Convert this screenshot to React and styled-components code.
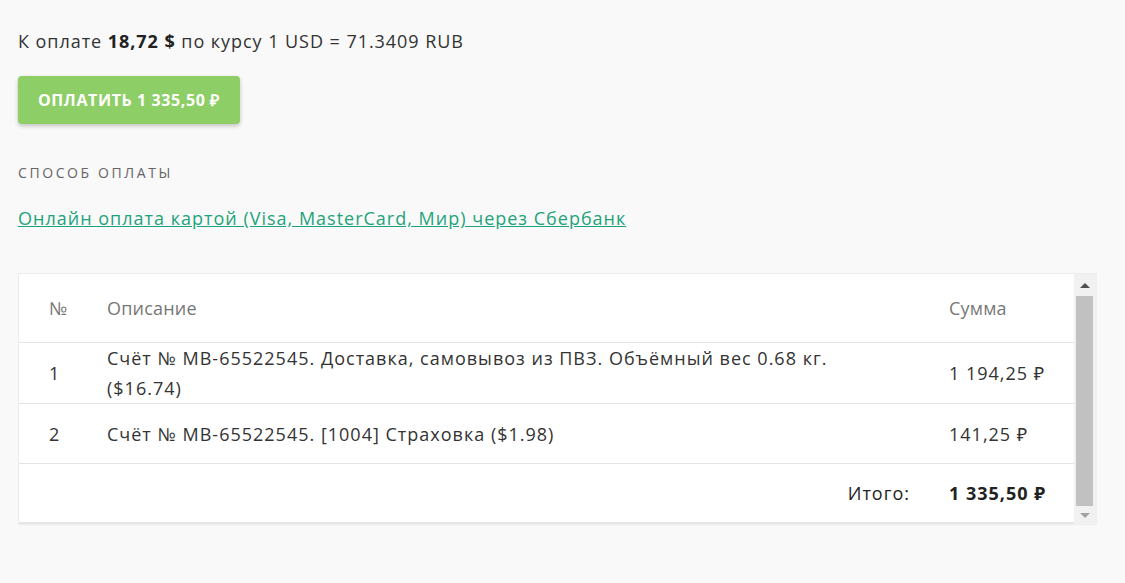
import React from "react";
import styled, {createGlobalStyle} from "styled-components";

const GlobalStyle = createGlobalStyle`
  html, body {
    margin: 0;
    padding: 0;
    background: #f9f9f9;
  }
  body {
    font-family: "Open Sans", "Noto Sans", sans-serif;
    color: #333;
  }
`;

const Page = styled.div`
  padding: 26px 18px 40px 18px;
  width: 1079px;
`;

const Summary = styled.div`
  font-size: 18px;
  line-height: 30px;
  letter-spacing: 0.95px;
  color: #333;

  b {
    font-weight: 700;
    color: #222;
  }
`;

const PayButton = styled.button`
  margin-top: 20px;
  height: 48px;
  padding: 0 20px;
  border: none;
  border-radius: 4px;
  background: #8ece66;
  color: #fff;
  font-family: "Open Sans", sans-serif;
  font-weight: 700;
  font-size: 16px;
  letter-spacing: 0.6px;
  text-transform: uppercase;
  box-shadow: 0 2px 4px rgba(0, 0, 0, 0.22);
  cursor: pointer;
  display: block;
`;

const SectionLabel = styled.div`
  margin-top: 39px;
  font-size: 14px;
  line-height: 20px;
  letter-spacing: 2.6px;
  color: #666;
  text-transform: uppercase;
`;

const MethodLink = styled.a`
  display: inline-block;
  margin-top: 20px;
  font-size: 18px;
  line-height: 30px;
  letter-spacing: 1px;
  color: #1ea37c;
  text-decoration: underline;
`;

const TableBox = styled.div`
  margin-top: 40px;
  display: flex;
  background: #fff;
  border: 1px solid #ececec;
  border-right: 2px solid #f0f0f0;
`;

const Table = styled.div`
  flex: 1;
  border-bottom: 2px solid #e6e6e6;
`;

const Row = styled.div`
  display: grid;
  grid-template-columns: 88px 1fr 125px;
  align-items: center;
  min-height: ${(p) => p.$height}px;
  border-top: ${(p) => (p.$first ? "none" : "1px solid #e3e3e3")};
  font-size: 18px;
  line-height: 30px;
  letter-spacing: ${(p) => (p.$head ? "0.2px" : "1px")};
  color: ${(p) => (p.$head ? "#777" : "#333")};
`;

const NumCell = styled.div`
  padding-left: 30px;
`;

const DescCell = styled.div`
  padding-right: 70px;
`;

const SumCell = styled.div`
  font-weight: ${(p) => (p.$bold ? 700 : 400)};
  color: ${(p) => (p.$bold ? "#222" : "inherit")};
`;

const TotalLabel = styled.div`
  grid-column: 1 / 3;
  text-align: right;
  padding-right: 39px;
  color: #222;
`;

const Scrollbar = styled.div`
  width: 19px;
  display: flex;
  flex-direction: column;
  align-items: center;
  background: #f1f1f1;
  padding: 0 1px;
`;

const Arrow = styled.div`
  height: ${(p) => p.$h}px;
  display: flex;
  align-items: center;
  justify-content: center;

  &::after {
    content: "";
    border-left: 5px solid transparent;
    border-right: 5px solid transparent;
    ${(p) => (p.$down ? "border-top: 5px solid #a3a3a3;" : "border-bottom: 5px solid #505050;")}
  }
`;

const Thumb = styled.div`
  flex: 1;
  width: 17px;
  background: #c1c1c1;
`;

const items = [
  {n: 1, desc: "Счёт № МВ-65522545. Доставка, самовывоз из ПВЗ. Объёмный вес 0.68 кг. ($16.74)", sum: "1 194,25 ₽", h: 60},
  {n: 2, desc: "Счёт № МВ-65522545. [1004] Страховка ($1.98)", sum: "141,25 ₽", h: 59},
];

export default function App() {
  return (
    <Page>
      <GlobalStyle />
      <Summary>
        К оплате <b>18,72 $</b> по курсу 1 USD = 71.3409 RUB
      </Summary>
      <PayButton>Оплатить 1 335,50 ₽</PayButton>
      <SectionLabel>Способ оплаты</SectionLabel>
      <MethodLink href="#">Онлайн оплата картой (Visa, MasterCard, Мир) через Сбербанк</MethodLink>
      <TableBox>
        <Table>
          <Row $head $first $height={68}>
            <NumCell>№</NumCell>
            <DescCell>Описание</DescCell>
            <SumCell>Сумма</SumCell>
          </Row>
          {items.map((it) => (
            <Row key={it.n} $height={it.h}>
              <NumCell>{it.n}</NumCell>
              <DescCell>{it.desc}</DescCell>
              <SumCell>{it.sum}</SumCell>
            </Row>
          ))}
          <Row $height={58}>
            <TotalLabel>Итого:</TotalLabel>
            <SumCell $bold>1 335,50 ₽</SumCell>
          </Row>
        </Table>
        <Scrollbar>
          <Arrow $h={22} />
          <Thumb />
          <Arrow $h={18} $down />
        </Scrollbar>
      </TableBox>
    </Page>
  );
}
